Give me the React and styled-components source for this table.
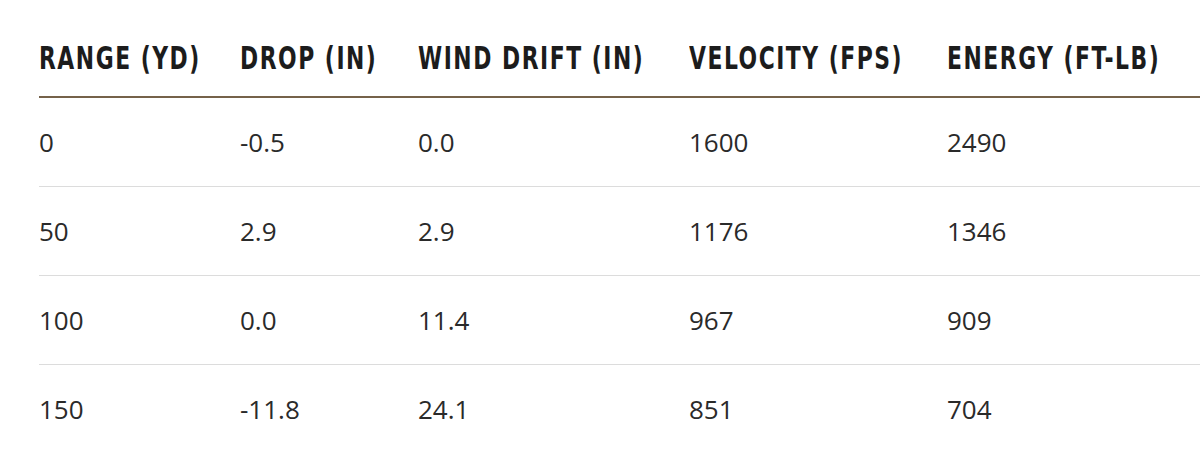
import styled, { createGlobalStyle } from "styled-components";

const GlobalStyle = createGlobalStyle`
  body {
    margin: 0;
    background: #fff;
    color: #222;
    font-family: "Open Sans", "Liberation Sans", sans-serif;
  }
`;

const Wrap = styled.div`
  width: 1200px;
  height: 458px;
  overflow: hidden;
  padding-left: 39px;
  box-sizing: border-box;
`;

const Table = styled.table`
  border-collapse: collapse;
  table-layout: fixed;
  width: 1260px;
`;

const Th = styled.th`
  height: 97px;
  padding: 19px 0 0;
  text-align: left;
  vertical-align: middle;
  box-sizing: border-box;
  border-bottom: 2px solid #75624a;
  font-family: "DejaVu Sans Condensed", "Liberation Sans Narrow", sans-serif;
  font-weight: 700;
  font-size: 32px;
  letter-spacing: 2px;
  color: #1c1c1c;
  white-space: nowrap;
  width: ${(p) => p.w || "auto"};
`;

const Label = styled.span`
  display: inline-block;
  transform: scaleX(0.76);
  transform-origin: left center;
`;

const Td = styled.td`
  height: 88px;
  padding: 0;
  text-align: left;
  vertical-align: middle;
  font-size: 26px;
  color: #2a2a2a;
  border-bottom: 1px solid #dcdcdc;
`;

const Tr = styled.tr`
  &:last-child td {
    border-bottom: none;
  }
`;

const columns = [
  { label: "RANGE (YD)", w: "201px" },
  { label: "DROP (IN)", w: "178px" },
  { label: "WIND DRIFT (IN)", w: "271px" },
  { label: "VELOCITY (FPS)", w: "258px" },
  { label: "ENERGY (FT-LB)", w: "auto" },
];

const rows = [
  ["0", "-0.5", "0.0", "1600", "2490"],
  ["50", "2.9", "2.9", "1176", "1346"],
  ["100", "0.0", "11.4", "967", "909"],
  ["150", "-11.8", "24.1", "851", "704"],
];

const App = () => {
  return (
    <>
      <GlobalStyle />
      <Wrap>
        <Table>
          <thead>
            <tr>
              {columns.map((c) => (
                <Th key={c.label} w={c.w}>
                  <Label>{c.label}</Label>
                </Th>
              ))}
            </tr>
          </thead>
          <tbody>
            {rows.map((r, i) => (
              <Tr key={i}>
                {r.map((v, j) => (
                  <Td key={j}>{v}</Td>
                ))}
              </Tr>
            ))}
          </tbody>
        </Table>
      </Wrap>
    </>
  );
};

export default App;
